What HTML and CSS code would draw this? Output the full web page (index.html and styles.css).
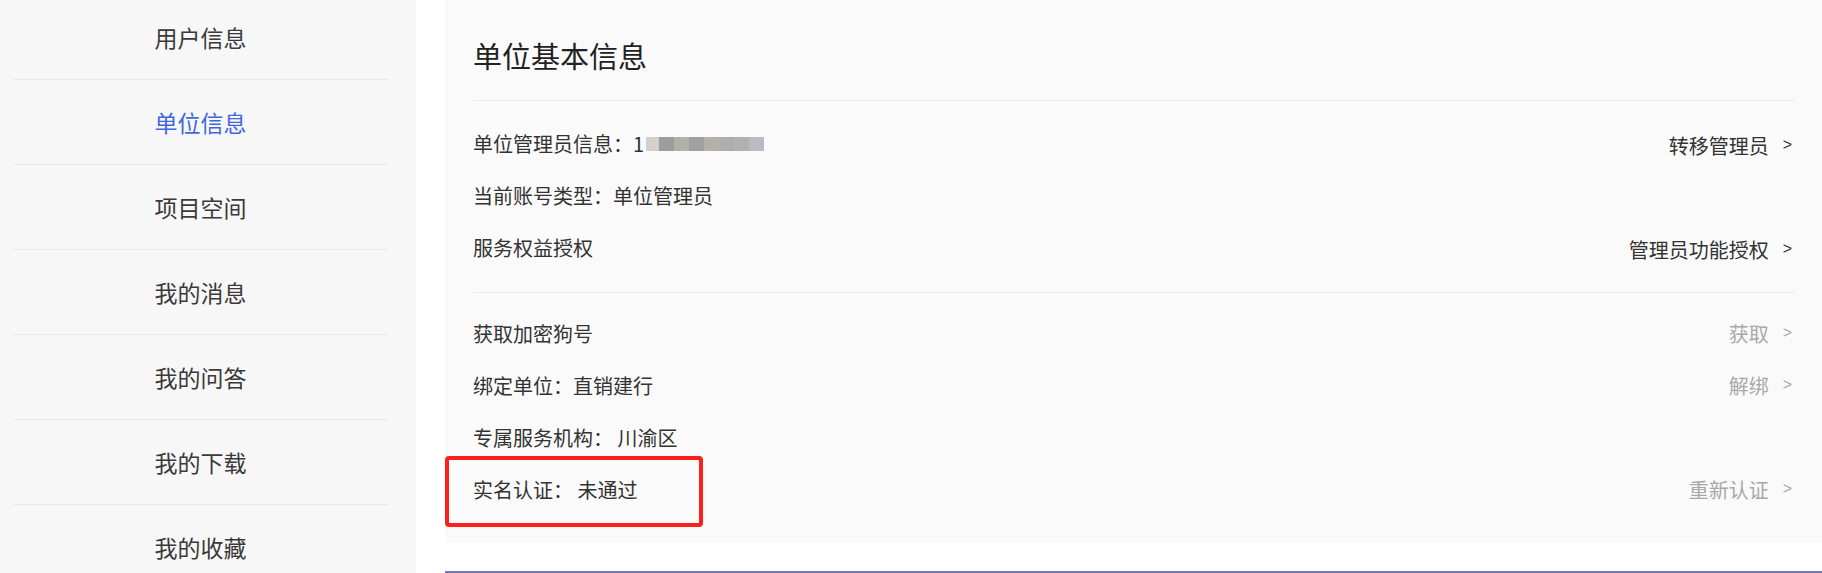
FILE: index.html
```html
<!DOCTYPE html>
<html lang="zh-CN">
<head>
<meta charset="utf-8">
<title>单位基本信息</title>
<link rel="stylesheet" href="styles.css">
</head>
<body>
<div class="page">
  <aside class="sidebar">
    <ul class="nav">
      <li class="nav-item">用户信息</li>
      <li class="nav-item active">单位信息</li>
      <li class="nav-item">项目空间</li>
      <li class="nav-item">我的消息</li>
      <li class="nav-item">我的问答</li>
      <li class="nav-item">我的下载</li>
      <li class="nav-item">我的收藏</li>
    </ul>
  </aside>
  <main class="main">
    <section class="panel">
      <h1 class="title">单位基本信息</h1>
      <div class="group group-first">
        <div class="row">
          <span class="label">单位管理员信息：1<span class="mosaic"><i class="m m1"></i><i class="m m2"></i><i class="m m3"></i><i class="m m4"></i><i class="m m5"></i><i class="m m6"></i><i class="m m7"></i><i class="m m8"></i></span></span>
          <a class="action dark">转移管理员<span class="arrow">&gt;</span></a>
        </div>
        <div class="row">
          <span class="label">当前账号类型：单位管理员</span>
        </div>
        <div class="row">
          <span class="label">服务权益授权</span>
          <a class="action dark">管理员功能授权<span class="arrow">&gt;</span></a>
        </div>
      </div>
      <div class="group group-second">
        <div class="row">
          <span class="label">获取加密狗号</span>
          <a class="action muted">获取<span class="arrow">&gt;</span></a>
        </div>
        <div class="row">
          <span class="label">绑定单位：直销建行</span>
          <a class="action muted">解绑<span class="arrow">&gt;</span></a>
        </div>
        <div class="row">
          <span class="label">专属服务机构： 川渝区</span>
        </div>
        <div class="row highlight-row">
          <span class="label">实名认证： 未通过</span>
          <a class="action muted">重新认证<span class="arrow">&gt;</span></a>
          <div class="annotation"></div>
        </div>
      </div>
    </section>
    <div class="bottom-bar"></div>
  </main>
</div>
</body>
</html>
```
FILE: styles.css
```css
* {
  box-sizing: border-box;
}

html, body {
  margin: 0;
  padding: 0;
  background: #ffffff;
  font-family: "Noto Sans CJK SC", "Noto Sans", "Liberation Sans", sans-serif;
  color: #333333;
}

.page {
  display: flex;
  height: 573px;
  overflow: hidden;
}

.sidebar {
  width: 416px;
  flex: 0 0 416px;
  background: #f7f7f7;
  height: 573px;
  overflow: hidden;
}

.nav {
  list-style: none;
  margin: -5px 0 0 0;
  padding: 0;
}

.nav-item {
  margin: 0 28px 0 13px;
  height: 85px;
  border-bottom: 1px solid #e9e9e9;
  display: flex;
  align-items: center;
  justify-content: center;
  font-size: 23px;
  color: #3a3a3a;
}

.nav-item.active {
  color: #3f68de;
}

.main {
  flex: 1;
  margin-left: 29px;
  display: flex;
  flex-direction: column;
}

.panel {
  background: #fafafa;
  height: 543px;
  padding: 0 27px 0 28px;
}

.title {
  margin: 0;
  padding: 35px 0 25px;
  line-height: 40px;
  font-size: 29px;
  font-weight: normal;
  color: #222222;
  border-bottom: 1px solid #ebebeb;
}

.group-first {
  padding: 16px 0 19px;
  border-bottom: 1px solid #ebebeb;
}

.group-second {
  padding: 14px 0 0;
}

.row {
  height: 52px;
  display: flex;
  align-items: center;
  justify-content: space-between;
  font-size: 20px;
  position: relative;
}

.label {
  display: flex;
  align-items: center;
  color: #333333;
  white-space: pre;
}

.mosaic {
  display: flex;
  margin-left: 2px;
  height: 14px;
  margin-top: 1px;
}

.m {
  display: block;
  width: 15px;
  height: 14px;
}

.m1 { width: 13px; background: #d3d0cb; }
.m2 { background: #9c9ca0; }
.m3 { background: #b3b0ab; }
.m4 { background: #a0a0a5; }
.m5 { background: #b3b0ac; }
.m6 { background: #afaeae; }
.m7 { background: #b3b1ae; }
.m8 { background: #bbbcc1; }

.action {
  display: flex;
  align-items: center;
  cursor: pointer;
}

.action.dark {
  color: #333333;
  margin-top: 4px;
}

.action.muted {
  color: #a8a8a8;
}

.arrow {
  font-family: "Liberation Sans", Arial, sans-serif;
  font-size: 16px;
  margin-left: 14px;
  margin-right: 3px;
}

.annotation {
  position: absolute;
  left: -28px;
  top: -7px;
  width: 258px;
  height: 71px;
  border: 4px solid #ff1f1a;
  border-radius: 4px;
  pointer-events: none;
}

.bottom-bar {
  margin-top: 28px;
  height: 2px;
  background: #7a78b4;
}
```
